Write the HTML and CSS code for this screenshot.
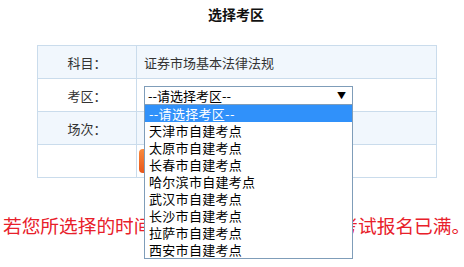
FILE: index.html
```html
<!DOCTYPE html>
<html lang="zh">
<head>
    <meta charset="UTF-8">
    <title>选择考区</title>
    <link rel="stylesheet" href="styles.css">
</head>
<body>
    <h1 class="title">选择考区</h1>
    <table class="form-table">
        <tr class="row-blue">
            <td class="label">科目：</td>
            <td class="value">证券市场基本法律法规</td>
        </tr>
        <tr>
            <td class="label">考区：</td>
            <td class="value">
                <div class="select">
                    <span class="select-text">--请选择考区--</span>
                    <span class="select-arrow">▼</span>
                    <ul class="options">
                        <li class="active">--请选择考区--</li>
                        <li>天津市自建考点</li>
                        <li>太原市自建考点</li>
                        <li>长春市自建考点</li>
                        <li>哈尔滨市自建考点</li>
                        <li>武汉市自建考点</li>
                        <li>长沙市自建考点</li>
                        <li>拉萨市自建考点</li>
                        <li>西安市自建考点</li>
                    </ul>
                </div>
            </td>
        </tr>
        <tr class="row-blue">
            <td class="label">场次：</td>
            <td class="value"></td>
        </tr>
        <tr>
            <td class="label"></td>
            <td class="value"><button class="btn">提交</button></td>
        </tr>
    </table>
    <p class="notice">若您所选择的时间场次无法选择，说明该考试报名已满。</p>
</body>
</html>
```

FILE: styles.css
```css
html, body {
    height: 100%;
}
body {
    margin: 0;
    font-family: "Noto Sans CJK SC", "Noto Sans", sans-serif;
    color: #333;
    background: #fff;
}
.title {
    margin: 0;
    padding-top: 4px;
    padding-left: 8px;
    font-size: 14px;
    line-height: 20px;
    font-weight: bold;
    text-align: center;
    color: #111;
}
.form-table {
    margin: 21px 0 0 37px;
    width: 400px;
    border-collapse: collapse;
    font-size: 13px;
}
.form-table td {
    height: 32px;
    padding: 0;
    border: 1px solid #cadcec;
}
.row-blue td {
    background: #f1f7fd;
}
.label {
    width: 98px;
    text-align: center;
}
.value {
    padding-left: 7px !important;
}
.select {
    position: relative;
    z-index: 10;
    width: 207px;
    height: 17px;
    border: 1px solid #7f9db9;
    background: #fff;
    display: flex;
    align-items: center;
    justify-content: space-between;
    color: #000;
}
.select-text {
    padding-left: 3px;
    font-size: 13px;
    line-height: 17px;
}
.select-arrow {
    font-size: 9px;
    padding-right: 6px;
}
.options {
    position: absolute;
    top: 17px;
    left: -1px;
    width: 207px;
    margin: 0;
    padding: 0;
    list-style: none;
    border: 1px solid #7f9db9;
    background: #fff;
}
.options li {
    height: 17px;
    line-height: 17px;
    padding-left: 4px;
    font-size: 13px;
    letter-spacing: 0.3px;
    color: #000;
}
.options li.active {
    background: #3091fa;
    color: #fff;
}
.btn {
    width: 80px;
    height: 24px;
    margin-left: -5px;
    border: none;
    border-radius: 4px;
    background: linear-gradient(#f98a3e, #e8561a);
    color: #fff;
    font-size: 13px;
}
.notice {
    position: relative;
    z-index: 1;
    margin: 35px 0 0 3px;
    white-space: nowrap;
    font-size: 18.7px;
    line-height: 24px;
    color: #e8202a;
}
```
